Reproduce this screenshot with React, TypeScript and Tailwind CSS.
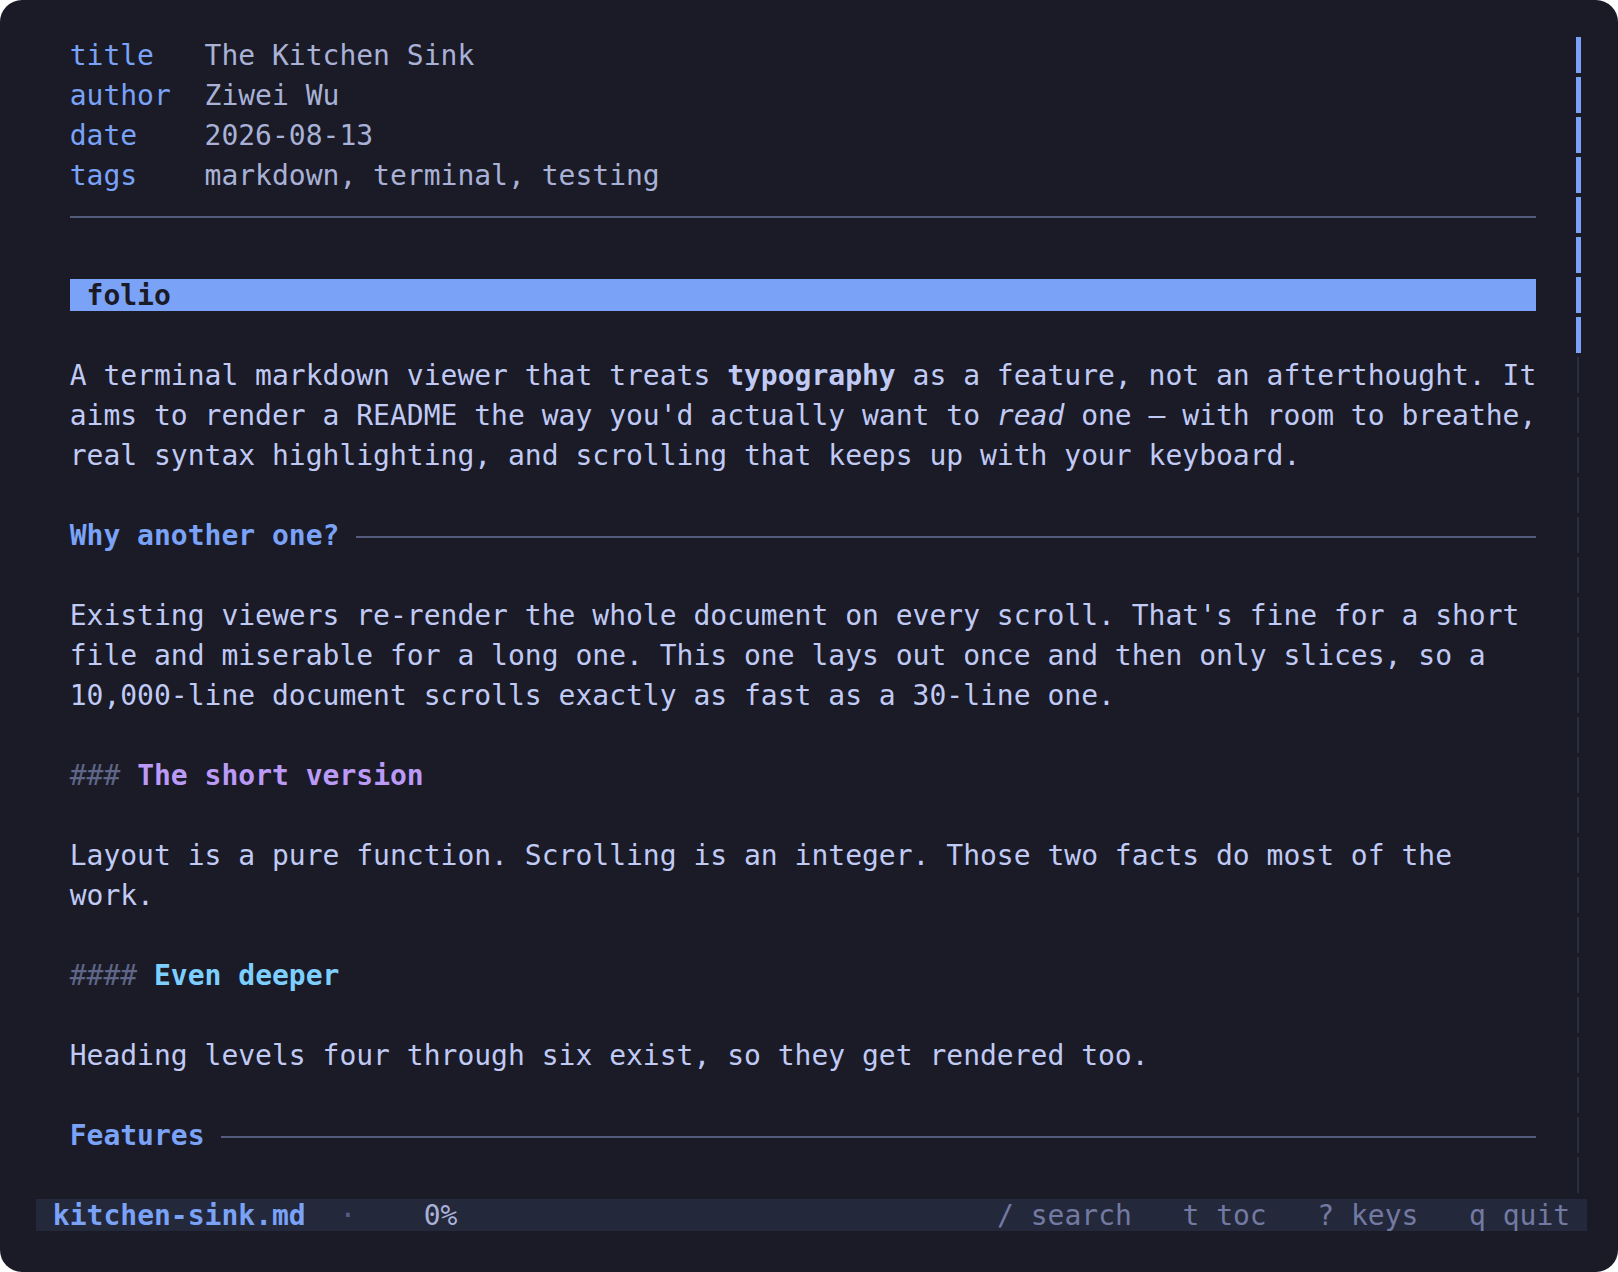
import React from "react";

const Row = ({ children, className = "" }: { children?: React.ReactNode; className?: string }) => (
  <div className={`h-[40px] pt-[1px] leading-[40px] whitespace-pre ${className}`}>{children}</div>
);

const Rule = () => <div className="flex-1 h-[2px] bg-[#545c7e] mt-[3px]" />;

export default function App() {
  const thumbRows = 8;
  const trackRows = 29;
  return (
    <div className="w-[1618px] h-[1272px] bg-white">
      <div className="w-[1618px] h-[1272px] bg-[#1a1b26] rounded-[22px] pt-[35px] pl-[36px] font-['DejaVu_Sans_Mono',monospace] text-[28px] text-[#c0caf5] overflow-hidden">
        <div className="flex">
          <div className="ml-[33.7px] w-[1466.6px] flex flex-col">
            <Row>
              <span className="text-[#7aa2f7]">{"title   "}</span>
              <span className="text-[#a9b1d6]">The Kitchen Sink</span>
            </Row>
            <Row>
              <span className="text-[#7aa2f7]">{"author  "}</span>
              <span className="text-[#a9b1d6]">Ziwei Wu</span>
            </Row>
            <Row>
              <span className="text-[#7aa2f7]">{"date    "}</span>
              <span className="text-[#a9b1d6]">2026-08-13</span>
            </Row>
            <Row>
              <span className="text-[#7aa2f7]">{"tags    "}</span>
              <span className="text-[#a9b1d6]">markdown, terminal, testing</span>
            </Row>
            <div className="h-[40px] flex items-center">
              <Rule />
            </div>
            <Row />
            <div className="h-[40px] flex items-center">
              <div className="w-full h-[32px] pt-[1px] leading-[32px] bg-[#7aa2f7] text-[#1a1b26] font-bold whitespace-pre">{" folio"}</div>
            </div>
            <Row />
            <Row>
              {"A terminal markdown viewer that treats "}
              <span className="font-bold">typography</span>
              {" as a feature, not an afterthought. It"}
            </Row>
            <Row>
              {"aims to render a README the way you'd actually want to "}
              <span className="italic">read</span>
              {" one \u2014 with room to breathe,"}
            </Row>
            <Row>real syntax highlighting, and scrolling that keeps up with your keyboard.</Row>
            <Row />
            <div className="h-[40px] pt-[1px] leading-[40px] flex items-center whitespace-pre">
              <span className="font-bold text-[#7aa2f7]">Why another one?</span>
              <span>{" "}</span>
              <Rule />
            </div>
            <Row />
            <Row>Existing viewers re-render the whole document on every scroll. That's fine for a short</Row>
            <Row>file and miserable for a long one. This one lays out once and then only slices, so a</Row>
            <Row>10,000-line document scrolls exactly as fast as a 30-line one.</Row>
            <Row />
            <Row>
              <span className="text-[#5f6688]">{"### "}</span>
              <span className="font-bold text-[#bb9af7]">The short version</span>
            </Row>
            <Row />
            <Row>Layout is a pure function. Scrolling is an integer. Those two facts do most of the</Row>
            <Row>work.</Row>
            <Row />
            <Row>
              <span className="text-[#5f6688]">{"#### "}</span>
              <span className="font-bold text-[#7dcfff]">Even deeper</span>
            </Row>
            <Row />
            <Row>Heading levels four through six exist, so they get rendered too.</Row>
            <Row />
            <div className="h-[40px] pt-[1px] leading-[40px] flex items-center whitespace-pre">
              <span className="font-bold text-[#7aa2f7]">Features</span>
              <span>{" "}</span>
              <Rule />
            </div>
            <Row />
          </div>
          <div className="ml-[33.7px] w-[16.86px] flex flex-col">
            {Array.from({ length: trackRows }).map((_, i) => (
              <div key={i} className="h-[40px] flex items-center justify-center">
                {i < thumbRows ? (
                  <div className="w-[5px] h-[36px] bg-[#7aa2f7]" />
                ) : (
                  <div className="w-[2px] h-[36px] bg-[#292e42]" />
                )}
              </div>
            ))}
          </div>
        </div>
        <div className="h-[40px] flex items-center">
          <div className="w-[1551px] h-[32px] pt-[1px] leading-[32px] bg-[#24283b] whitespace-pre flex justify-between">
            <div>
              <span>{" "}</span>
              <span className="font-bold text-[#7aa2f7]">kitchen-sink.md</span>
              <span>{"  "}</span>
              <span className="text-[#565f89]">{"\u00b7"}</span>
              <span className="text-[#a9b1d6]">{"    0%"}</span>
            </div>
            <div className="text-[#737aa2]">{"/ search   t toc   ? keys   q quit "}</div>
          </div>
        </div>
      </div>
    </div>
  );
}
